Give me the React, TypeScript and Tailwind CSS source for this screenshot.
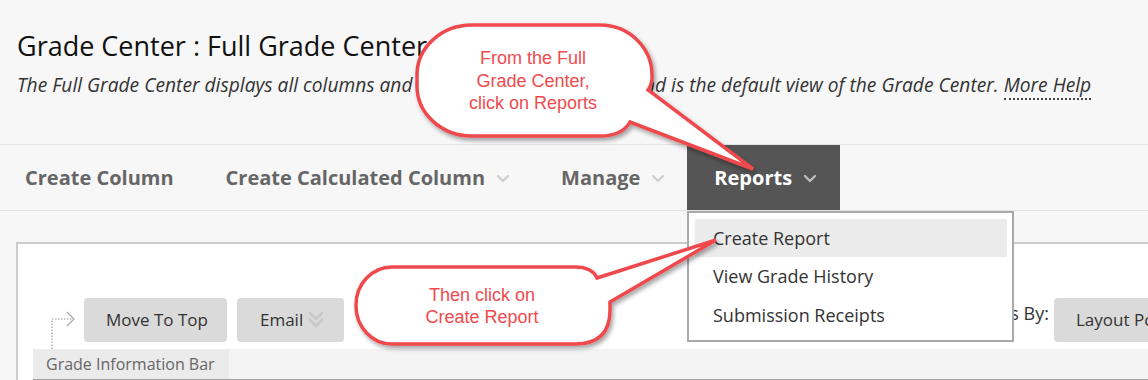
import React from 'react';

function Chevron({ className }: { className?: string }) {
  return (
    <svg viewBox="0 0 14 9" className={className} fill="none" stroke="currentColor" strokeWidth="2.4" strokeLinecap="round" strokeLinejoin="round">
      <path d="M2 2l5 5 5-5" />
    </svg>
  );
}

function DoubleChevron() {
  return (
    <svg viewBox="0 0 18 20" className="w-[18px] h-[20px] text-[#c8c8c8]" fill="none" stroke="currentColor" strokeWidth="2.6" strokeLinecap="round" strokeLinejoin="round">
      <path d="M3 3l6 6 6-6" />
      <path d="M3 10l6 6 6-6" />
    </svg>
  );
}

const navItems = [
  { label: 'Create Column', chevron: false, cls: 'pl-[25px] pr-[24px]' },
  { label: 'Create Calculated Column', chevron: true, cls: 'pl-[28px] pr-[24px]' },
  { label: 'Manage', chevron: true, cls: 'pl-[27px] pr-[22px]' },
];

export default function App() {
  return (
    <div className="relative w-[1148px] h-[380px] overflow-hidden bg-[#f7f7f7] font-['Open_Sans',sans-serif]">
      {/* page header */}
      <header className="h-[144px] px-[17px] pt-[28px]">
        <h1 className="text-[27px] leading-[36px] text-[#111] whitespace-nowrap">Grade Center : Full Grade Center</h1>
        <p className="mt-[8px] text-[19.2px] leading-[26px] italic text-[#333] whitespace-nowrap">
          The Full Grade Center displays all columns and rows in the Grade Center and is the default view of the Grade Center.{' '}
          <span className="border-b-2 border-dotted border-[#444]">More Help</span>
        </p>
      </header>

      {/* action bar */}
      <nav className="flex h-[67px] border-y border-[#e3e3e3]">
        {navItems.map((item) => (
          <div key={item.label} className={`flex items-center ${item.cls} text-[20px] font-bold text-[#666] whitespace-nowrap`}>
            {item.label}
            {item.chevron && <Chevron className="ml-[11px] mt-[2px] w-[14px] h-[9px] text-[#cfcfcf]" />}
          </div>
        ))}
        <div className="flex items-center pl-[27px] pr-[23px] bg-[#555] text-[20px] font-bold text-white whitespace-nowrap">
          Reports
          <Chevron className="ml-[11px] mt-[2px] w-[14px] h-[9px] text-[#bdbdbd]" />
        </div>
      </nav>

      {/* grade center panel */}
      <div className="pt-[31px] pl-[16px]">
        <div className="w-[1270px] h-[200px] bg-white border-l-2 border-t-2 border-[#cccccc]">
          <div className="flex items-center pt-[54px] pl-[30px] pr-[42px]">
            <svg width="30" height="44" viewBox="0 0 30 44" className="overflow-visible shrink-0" fill="none">
              <path d="M4 51V21H24" stroke="#a0a0a0" strokeWidth="1.2" strokeDasharray="1.5 1.5" />
              <path d="M19 14l7 7-7 7" stroke="#a8a8a8" strokeWidth="1.2" />
            </svg>
            <button className="ml-[6px] h-[44px] pl-[22px] pr-[19px] rounded-[4px] bg-[#dadada] text-[17px] text-[#333]">Move To Top</button>
            <button className="ml-[10px] h-[44px] pl-[23px] pr-[19px] rounded-[4px] bg-[#dadada] text-[17px] text-[#333] flex items-center gap-[4px]">
              Email
              <DoubleChevron />
            </button>
            <div className="ml-auto flex items-center">
              <span className="mb-[14px] text-[18px] text-[#333] whitespace-nowrap">Filter Results By:</span>
              <button className="ml-[5px] w-[190px] h-[44px] pl-[22px] rounded-[4px] bg-[#dadada] text-[17px] text-[#333] text-left whitespace-nowrap">Layout Position</button>
            </div>
          </div>
          <div className="flex mt-[7px] ml-[15px] h-[31px] border-b border-[#a0a0a0]">
            <div className="pl-[13px] pr-[14px] bg-[#ebebeb] text-[16px] leading-[31px] text-[#666] whitespace-nowrap">Grade Information Bar</div>
            <div className="flex-1 bg-[#f4f4f4]" />
          </div>
        </div>
      </div>

      {/* reports menu */}
      <div className="absolute left-[687px] top-[211px] w-[327px] h-[131px] bg-white border-2 border-[#a9a9a9] pt-[6px] pl-[6px] pr-[5px]">
        <div className="h-[38px] pl-[18px] bg-[#ebebeb] text-[18px] leading-[38px] text-[#333]">Create Report</div>
        <div className="h-[39px] pl-[18px] text-[18px] leading-[39px] text-[#333]">View Grade History</div>
        <div className="h-[39px] pl-[18px] text-[18px] leading-[39px] text-[#333]">Submission Receipts</div>
      </div>

      {/* annotation callouts */}
      <svg className="absolute inset-0 pointer-events-none" width="1148" height="380" viewBox="0 0 1148 380">
        <defs>
          <filter id="shadow" x="-20%" y="-20%" width="140%" height="150%">
            <feDropShadow dx="2" dy="3" stdDeviation="2" floodColor="#000" floodOpacity="0.35" />
          </filter>
        </defs>
        <path
          d="M472 25H600A52 50 0 0 1 652 75V80Q651 86 648 90L753 169L630 122Q622 136 600 136H472A55 50 0 0 1 417 86V75A55 50 0 0 1 472 25Z"
          fill="#fff"
          stroke="#f04a4d"
          strokeWidth="3.5"
          filter="url(#shadow)"
        />
        <text fill="#f04a4d" fontSize="18" textAnchor="middle" fontFamily="'Liberation Sans', Arial, sans-serif">
          <tspan x="533" y="64">From the Full</tspan>
          <tspan x="533" y="87">Grade Center,</tspan>
          <tspan x="533" y="109">click on Reports</tspan>
        </text>
        <path
          d="M392 267H575Q592 267 597 278L716 240L610 302V310Q610 344 575 344H392A36 38 0 0 1 356 305.5A36 38 0 0 1 392 267Z"
          fill="#fff"
          stroke="#f04a4d"
          strokeWidth="3.5"
          filter="url(#shadow)"
        />
        <text fill="#f04a4d" fontSize="18" textAnchor="middle" fontFamily="'Liberation Sans', Arial, sans-serif">
          <tspan x="482" y="301">Then click on</tspan>
          <tspan x="482" y="323">Create Report</tspan>
        </text>
      </svg>
    </div>
  );
}
